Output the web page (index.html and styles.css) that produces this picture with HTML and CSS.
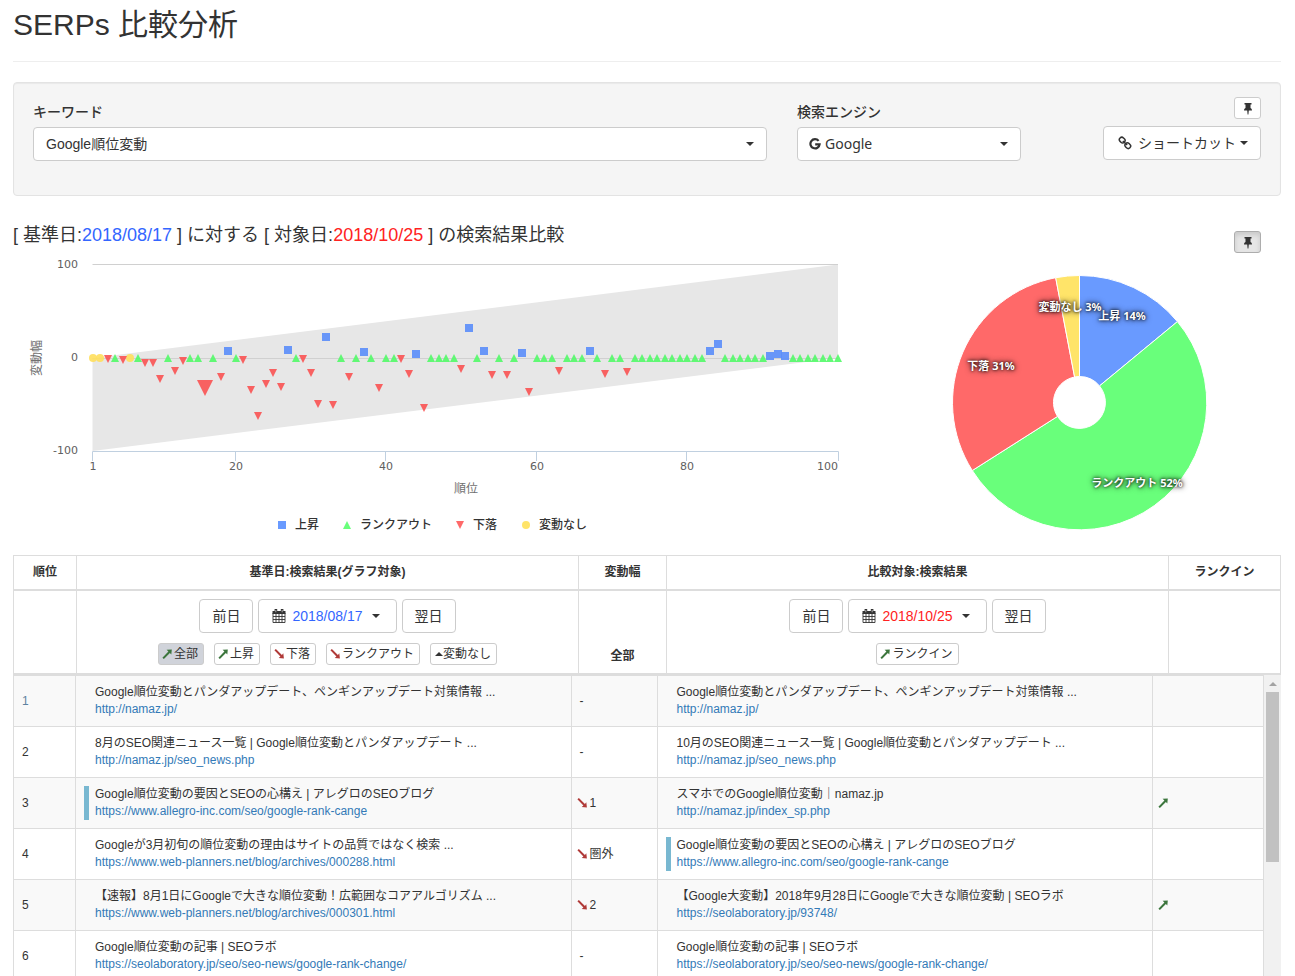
FILE: index.html
```html
<!DOCTYPE html>
<html lang="ja">
<head>
<meta charset="utf-8">
<title>SERPs 比較分析</title>
<link rel="stylesheet" href="styles.css">
</head>
<body>
<svg class="defs" width="0" height="0" aria-hidden="true">
  <symbol id="i-pin" viewBox="0 0 10 13"><path d="M1.500 1h7v1.500H7.500V6C8.600 6.500 9 7.200 9 8.500H5.800L5.400 12.500h-.8L4.200 8.500H1C1 7.200 1.400 6.500 2.500 6V2.500h-1z" fill="#333"/></symbol>
  <symbol id="i-link" viewBox="0 0 14 14"><g fill="none" stroke="#333" stroke-width="1.500"><rect x="1.200" y="1.700" width="6" height="4.800" rx="2.400" transform="rotate(45 4.200 4.100)"/><rect x="6.800" y="7.300" width="6" height="4.800" rx="2.400" transform="rotate(45 9.800 9.700)"/><path d="M4.800 5l4.400 4"/></g></symbol>
  <symbol id="i-g" viewBox="0 0 12 12"><path d="M9.600 2.900A4.600 4.600 0 1 0 10.600 6.300H6.200" fill="none" stroke="#333" stroke-width="2.200"/></symbol>
  <symbol id="i-cal" viewBox="0 0 14 14"><path d="M.5 2h13v3H.5z" fill="#333"/><path d="M1 4v9.500h12V4M1 7.500h12M1 10.500h12M4 5v8.500M7 5v8.500M10 5v8.500" fill="none" stroke="#333" stroke-width=".9"/><path d="M2.600 0h2.600v4H2.600zM8.800 0h2.600v4H8.800z" fill="#333"/><path d="M3.600 1h.6v2.200h-.6zM9.800 1h.6v2.200h-.6z" fill="#fff"/></symbol>
  <symbol id="i-up" viewBox="0 0 12 12"><path d="M.4 9.700L6.400 3.500 4.600 1.800 9.800 1.500 9.300 6.500 7.900 5 1.900 10.900z" fill="#3c763d"/></symbol>
  <symbol id="i-down" viewBox="0 0 12 12"><path d="M.4 2.300L1.900 1 7.900 6.900 9.300 5.300 9.900 10.500 4.700 10 6.400 8.400z" fill="#b03a38"/></symbol>
</svg>

<main class="page">
  <header class="page-header"><h1>SERPs 比較分析</h1></header>

  <form class="well">
    <div class="field">
      <label for="keyword">キーワード</label>
      <div class="select"><select id="keyword"><option>Google順位変動</option></select></div>
    </div>
    <div class="field">
      <label for="engine">検索エンジン</label>
      <div class="select engine"><svg class="g"><use href="#i-g"/></svg><select id="engine"><option>Google</option></select></div>
    </div>
    <div class="tools">
      <button type="button" class="btn pin" aria-label="固定"><svg><use href="#i-pin"/></svg></button>
      <button type="button" class="btn"><svg class="i14"><use href="#i-link"/></svg><span>ショートカット</span><i class="caret"></i></button>
    </div>
  </form>

  <section class="compare">
    <div class="compare-head">
      <h2>[ 基準日:<span class="base">2018/08/17</span> ] に対する [ 対象日:<span class="target">2018/10/25</span> ] の検索結果比較</h2>
      <button type="button" class="btn pin active" aria-label="固定"><svg><use href="#i-pin"/></svg></button>
    </div>
    <div class="charts">
      <svg class="chart" viewBox="0 0 842 285" role="img" aria-label="変動幅">
        <path d="M79.500 103L825 9.500V103L79.500 196z" fill="#e7e7e7"/>
        <path d="M79.500 9.500H825M79.500 103.500H825" stroke="#d0d0d0"/>
        <path d="M79.500 206V196.500H825.500V206M222.500 196.500V206M372.500 196.500V206M523.500 196.500V206M673.500 196.500V206" fill="none" stroke="#c0d0e0"/>
        <g id="points" fill-opacity=".9"></g>
        <g class="tick">
          <g text-anchor="end"><text x="65" y="13">100</text><text x="65" y="106">0</text><text x="65" y="199">-100</text><text x="825" y="215">100</text></g>
          <g text-anchor="middle"><text x="80" y="215">1</text><text x="223" y="215">20</text><text x="373" y="215">40</text><text x="524" y="215">60</text><text x="674" y="215">80</text></g>
        </g>
        <g class="axis" text-anchor="middle"><text x="453" y="238">順位</text><text transform="translate(28 103) rotate(-90)">変動幅</text></g>
        <path d="M265 266h8v8h-8z" fill="#699aff"/><path d="M330 274l4-8 4 8z" fill="#69ff7b"/><path d="M443 266h8l-4 8z" fill="#ff6969"/><circle cx="513" cy="270" r="4" fill="#ffe469"/>
        <g class="legend"><text x="282" y="274">上昇</text><text x="347" y="274">ランクアウト</text><text x="460" y="274">下落</text><text x="526" y="274">変動なし</text></g>
      </svg>
      <svg class="chart" viewBox="0 0 426 285" role="img" aria-label="変動の割合">
        <g stroke="#fff">
          <path d="M224.500 20.500A127 127 0 0 1 322.400 66.600L244.500 130.900A26 26 0 0 0 224.500 121.500z" fill="#699aff"/>
          <path d="M322.400 66.600A127 127 0 1 1 117.300 215.500L202.500 161.400A26 26 0 1 0 244.500 130.900z" fill="#69ff7b"/>
          <path d="M117.300 215.500A127 127 0 0 1 200.700 22.700L219.600 122A26 26 0 0 0 202.500 161.400z" fill="#ff6969"/>
          <path d="M200.700 22.700A127 127 0 0 1 224.500 20.500V121.500A26 26 0 0 0 219.600 122z" fill="#ffe469"/>
        </g>
        <g class="slice" text-anchor="middle"><text x="267" y="65">上昇 14%</text><text x="282" y="232">ランクアウト 52%</text><text x="136" y="115">下落 31%</text><text x="215" y="56">変動なし 3%</text></g>
      </svg>
    </div>
  </section>

  <table class="head">
    <colgroup><col class="h-rank"><col><col class="h-change"><col><col class="h-in"></colgroup>
    <thead>
      <tr><th>順位</th><th>基準日:検索結果(グラフ対象)</th><th>変動幅</th><th>比較対象:検索結果</th><th>ランクイン</th></tr>
      <tr>
        <td></td>
        <td>
          <div class="dates"><button type="button" class="btn">前日</button><button type="button" class="btn date"><svg class="i14"><use href="#i-cal"/></svg><span class="base">2018/08/17</span><i class="caret"></i></button><button type="button" class="btn">翌日</button></div>
          <div class="filters"><button type="button" class="btn xs selected"><svg><use href="#i-up"/></svg>全部</button><button type="button" class="btn xs"><svg><use href="#i-up"/></svg>上昇</button><button type="button" class="btn xs"><svg><use href="#i-down"/></svg>下落</button><button type="button" class="btn xs"><svg><use href="#i-down"/></svg>ランクアウト</button><button type="button" class="btn xs"><i class="caret up"></i>変動なし</button></div>
        </td>
        <th>全部</th>
        <td>
          <div class="dates"><button type="button" class="btn">前日</button><button type="button" class="btn date"><svg class="i14"><use href="#i-cal"/></svg><span class="target">2018/10/25</span><i class="caret"></i></button><button type="button" class="btn">翌日</button></div>
          <div class="filters"><button type="button" class="btn xs"><svg><use href="#i-up"/></svg>ランクイン</button></div>
        </td>
        <td></td>
      </tr>
    </thead>
  </table>

  <div class="results">
    <div class="rows">
      <table class="list">
        <colgroup><col class="b-rank"><col><col class="b-change"><col><col class="b-in"></colgroup>
        <tbody>
          <tr><td class="first">1</td><td><div class="site">Google順位変動とパンダアップデート、ペンギンアップデート対策情報 ...<a href="#">http://namaz.jp/</a></div></td><td>-</td><td><div class="site">Google順位変動とパンダアップデート、ペンギンアップデート対策情報 ...<a href="#">http://namaz.jp/</a></div></td><td></td></tr>
          <tr><td>2</td><td><div class="site">8月のSEO関連ニュース一覧 | Google順位変動とパンダアップデート ...<a href="#">http://namaz.jp/seo_news.php</a></div></td><td>-</td><td><div class="site">10月のSEO関連ニュース一覧 | Google順位変動とパンダアップデート ...<a href="#">http://namaz.jp/seo_news.php</a></div></td><td></td></tr>
          <tr><td>3</td><td><div class="site own">Google順位変動の要因とSEOの心構え | アレグロのSEOブログ<a href="#">https://www.allegro-inc.com/seo/google-rank-cange</a></div></td><td class="move"><svg><use href="#i-down"/></svg>1</td><td><div class="site">スマホでのGoogle順位変動｜namaz.jp<a href="#">http://namaz.jp/index_sp.php</a></div></td><td class="move"><svg><use href="#i-up"/></svg></td></tr>
          <tr><td>4</td><td><div class="site">Googleが3月初旬の順位変動の理由はサイトの品質ではなく検索 ...<a href="#">https://www.web-planners.net/blog/archives/000288.html</a></div></td><td class="move"><svg><use href="#i-down"/></svg>圏外</td><td><div class="site own">Google順位変動の要因とSEOの心構え | アレグロのSEOブログ<a href="#">https://www.allegro-inc.com/seo/google-rank-cange</a></div></td><td></td></tr>
          <tr><td>5</td><td><div class="site">【速報】8月1日にGoogleで大きな順位変動！広範囲なコアアルゴリズム ...<a href="#">https://www.web-planners.net/blog/archives/000301.html</a></div></td><td class="move"><svg><use href="#i-down"/></svg>2</td><td><div class="site">【Google大変動】2018年9月28日にGoogleで大きな順位変動 | SEOラボ<a href="#">https://seolaboratory.jp/93748/</a></div></td><td class="move"><svg><use href="#i-up"/></svg></td></tr>
          <tr><td>6</td><td><div class="site">Google順位変動の記事 | SEOラボ<a href="#">https://seolaboratory.jp/seo/seo-news/google-rank-change/</a></div></td><td>-</td><td><div class="site">Google順位変動の記事 | SEOラボ<a href="#">https://seolaboratory.jp/seo/seo-news/google-rank-change/</a></div></td><td></td></tr>
        </tbody>
      </table>
    </div>
    <div class="scrollbar" aria-hidden="true"><i class="arrow"></i><i class="thumb"></i></div>
  </div>
</main>
<script src="script.js"></script>
</body>
</html>
```
FILE: styles.css
```css
* { box-sizing: border-box; }
body {
  margin: 0;
  font-family: "Liberation Sans", "Noto Sans CJK JP", sans-serif;
  font-size: 14px;
  line-height: 20px;
  color: #333;
  background: #fff;
}
.defs { position: absolute; }
.page {
  height: 100vh;
  overflow: hidden;
  padding: 8px 14px 0 13px;
  display: flex;
  flex-direction: column;
}
.page > * { flex: none; }
.page-header {
  padding-bottom: 20px;
  border-bottom: 1px solid #eee;
  margin-bottom: 20px;
}
h1 { margin: 0; font-size: 30px; line-height: 33px; font-weight: 400; }
h2 { margin: 0; font-size: 18px; line-height: 20px; font-weight: 400; }
.base { color: #36f; }
.target { color: #f22; }

.well {
  display: grid;
  grid-template-columns: 734fr 224fr 210fr;
  gap: 30px;
  height: 114px;
  padding: 14px 19px 19px;
  border: 1px solid #e3e3e3;
  border-radius: 4px;
  background: #f5f5f5;
  box-shadow: inset 0 1px 1px rgba(0, 0, 0, .05);
}
.field { padding-top: 5px; }
label { display: block; margin-bottom: 5px; font-weight: 500; }
.select { position: relative; }
.select::after {
  content: "";
  position: absolute;
  right: 13px;
  top: 15px;
  border: 4px solid transparent;
  border-top-color: #333;
  border-bottom: 0;
}
select {
  appearance: none;
  width: 100%;
  height: 34px;
  padding: 0 12px;
  border: 1px solid #ccc;
  border-radius: 4px;
  background: #fff;
  color: #333;
  font: inherit;
}
.engine select { padding-left: 27px; font-family: "Noto Sans", sans-serif; }
.g { position: absolute; left: 12px; top: 11px; width: 12px; height: 12px; }
.tools { display: flex; flex-direction: column; align-items: flex-end; gap: 7px; }

.btn {
  display: inline-flex;
  align-items: center;
  justify-content: center;
  height: 34px;
  padding: 0 12px;
  border: 1px solid #ccc;
  border-radius: 4px;
  background: #fff;
  color: #333;
  font: inherit;
  white-space: nowrap;
}
.tools .btn { gap: 4px; }
.i14 { width: 14px; height: 14px; }
.tools .i14 { margin: 0 2px; }
.tools .btn.pin, .pin { width: 27px; height: 22px; padding: 0; border-radius: 3px; }
.pin svg { width: 10px; height: 13px; }
.pin.active {
  background: #e6e6e6;
  border-color: #adadad;
  box-shadow: inset 0 3px 5px rgba(0, 0, 0, .125);
}
.caret {
  border: 4px solid transparent;
  border-top-color: #333;
  border-bottom: 0;
}
.caret.up { border-top: 0; border-bottom: 4px solid #333; margin-left: 1px; }

.compare { padding-top: 29px; margin-bottom: 15px; }
.compare-head {
  display: flex;
  justify-content: space-between;
  align-items: flex-start;
  padding-right: 20px;
}
.compare-head .pin { margin: 6px 0 2px; }
.charts { display: grid; grid-template-columns: 842fr 426fr; }
.chart { display: block; width: 100%; height: auto; }
.tick { font: 11px "DejaVu Sans", sans-serif; fill: #606060; }
.axis { font-size: 12px; fill: #707070; }
.legend { font-size: 12px; font-weight: 500; fill: #333; }
.slice {
  font: bold 11px "Noto Sans", "Noto Sans CJK JP", sans-serif;
  fill: #fff;
  text-shadow: 0 0 6px #000, 0 0 3px #000;
}

table {
  width: 100%;
  table-layout: fixed;
  border-collapse: separate;
  border-spacing: 0;
  border-left: 1px solid #ddd;
  font-size: 12px;
  line-height: 17px;
}
th, td { padding: 8px; border-right: 1px solid #ddd; }
.head { border-top: 1px solid #ddd; }
.head th, .head td { border-bottom: 2px solid #ddd; vertical-align: bottom; text-align: center; }
.h-rank { width: 63px; }
.h-change { width: 88px; }
.h-in { width: 112px; }
.dates { display: flex; justify-content: center; gap: 5px; font-size: 14px; margin-bottom: 10px; }
.date { padding: 0 16px 0 13px; gap: 6px; }
.date .caret { margin-left: 3px; }
.filters { display: flex; justify-content: center; gap: 10px; }
.xs { height: 22px; padding: 0 5px 0 3px; border-radius: 3px; font-size: 12px; }
.xs svg, .move svg { width: 12px; height: 12px; }
.selected { background: #d0d3da; border-color: #ccc; }

.page > .results { flex: 1 1 0; min-height: 0; display: flex; }
.rows { flex: 1; overflow: hidden; border-top: 1px solid #ddd; }
.list td { border-bottom: 1px solid #ddd; }
.list tr:nth-child(odd) { background: #f9f9f9; }
.b-rank { width: 62px; }
.b-change { width: 86px; }
.b-in { width: 111px; }
.list .first { color: #5d82a0; }
.list .move { padding-left: 5px; }
.move svg { vertical-align: -2px; margin-right: 1px; }
.site { padding-left: 6px; border-left: 5px solid transparent; white-space: nowrap; }
.own { border-color: #79b8d1; }
.site a { display: block; color: #337ab7; text-decoration: none; }
.scrollbar {
  width: 17px;
  background: #f1f1f1;
  display: flex;
  flex-direction: column;
  align-items: center;
}
.arrow { margin: 7px 0 6px; border: 4px solid transparent; border-top: 0; border-bottom-color: #a3a3a3; }
.thumb { width: 13px; height: 170px; background: #c1c1c1; }
```
FILE: script.js
```javascript
// Scatter of rank changes: [rank, change] pairs per series.
const up = [[19,8],[27,9],[32,23],[37,6],[44,4],[51,32],[53,8],[58,5],[67,8],[83,8],[84,15],[91,2],[92,4],[93,2]];
const down = [[3,-1],[5,-2],[8,-5],[9,-5],[10,-23],[12,-14],[13,-3],[16,-32],[18,-20],[21,-2],[22,-34],[23,-62],[24,-28],[25,-16],[26,-31],[29,-1],[30,-16],[31,-49],[33,-50],[35,-20],[39,-32],[42,-1],[43,-17],[45,-54],[50,-12],[54,-18],[56,-18],[59,-37],[63,-14],[69,-17],[72,-15]];
const same = [1, 2, 6];
const taken = new Set([...up.map(p => p[0]), ...down.map(p => p[0]), ...same]);
const px = n => Math.round(79.5 + (n - 1) * 745.5 / 99);
const py = v => Math.round(103 - v * 0.93);
let out = "";
same.forEach(n => { out += `<circle cx="${px(n)}" cy="103" r="4" fill="#ffdf5c"/>`; });
up.forEach(([n, v]) => { out += `<path d="M${px(n) - 4} ${py(v) - 4}h8v8h-8z" fill="#5a8dfa"/>`; });
for (let n = 1; n <= 100; n++) {
  if (!taken.has(n)) out += `<path d="M${px(n) - 4} 107l4-8 4 8z" fill="#52fa68"/>`;
}
down.forEach(([n, v]) => {
  const r = n === 16 ? 8 : 4;
  out += `<path d="M${px(n) - r} ${py(v) - r}h${2 * r}l${-r} ${2 * r}z" fill="#fa5252"/>`;
});
document.getElementById("points").innerHTML = out;
```
